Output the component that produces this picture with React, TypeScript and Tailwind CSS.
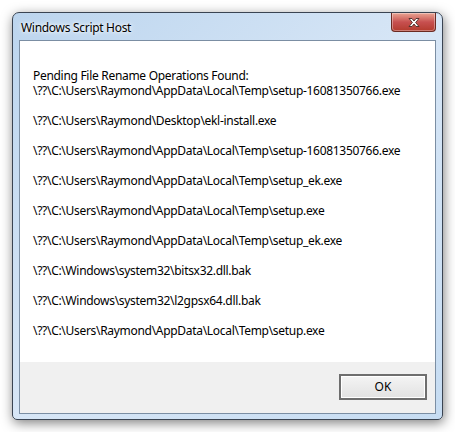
import React from 'react'

const lines = [
  'Pending File Rename Operations Found:',
  '\\??\\C:\\Users\\Raymond\\AppData\\Local\\Temp\\setup-16081350766.exe',
  '',
  '\\??\\C:\\Users\\Raymond\\Desktop\\ekl-install.exe',
  '',
  '\\??\\C:\\Users\\Raymond\\AppData\\Local\\Temp\\setup-16081350766.exe',
  '',
  '\\??\\C:\\Users\\Raymond\\AppData\\Local\\Temp\\setup_ek.exe',
  '',
  '\\??\\C:\\Users\\Raymond\\AppData\\Local\\Temp\\setup.exe',
  '',
  '\\??\\C:\\Users\\Raymond\\AppData\\Local\\Temp\\setup_ek.exe',
  '',
  '\\??\\C:\\Windows\\system32\\bitsx32.dll.bak',
  '',
  '\\??\\C:\\Windows\\system32\\l2gpsx64.dll.bak',
  '',
  '\\??\\C:\\Users\\Raymond\\AppData\\Local\\Temp\\setup.exe',
]

function CloseButton() {
  return (
    <div className="flex h-[19px] w-[45px] items-center justify-center rounded-b-[4px] border border-t-0 border-[#6b2a22] bg-gradient-to-b from-[#e8a493] via-[#c75050] to-[#b33a2c] shadow-[inset_0_0_0_1px_rgba(255,255,255,0.35)]">
      <svg width="14" height="11" viewBox="0 0 14 11">
        <path
          d="M2 1.5 H5 L7 4 L9 1.5 H12 L8.6 5.5 L12 9.5 H9 L7 7 L5 9.5 H2 L5.4 5.5 Z"
          fill="#ffffff"
          stroke="#4a2a26"
          strokeWidth="0.9"
          strokeLinejoin="round"
        />
      </svg>
    </div>
  )
}

export default function App() {
  return (
    <div className="h-[432px] w-[455px] bg-white pl-[12px] pt-[12px]" style={{ fontFamily: '"Noto Sans", "Open Sans", sans-serif' }}>
      <div className="flex h-[408px] w-[431px] flex-col rounded-t-[7px] rounded-b-[5px] border border-[#3a4452] bg-gradient-to-br from-[#bcd5ee] via-[#d7e6f6] to-[#c6dcf2] shadow-[1px_3px_12px_rgba(0,0,0,0.5)]">
        {/* Title bar */}
        <div className="flex h-[27px] items-start justify-between pl-[8px] pr-[6px]">
          <span className="mt-[7px] text-[12px] leading-[15px] tracking-[-0.3px] text-black [text-shadow:0_0_6px_#ffffff,0_0_3px_#ffffff]">
            Windows Script Host
          </span>
          <CloseButton />
        </div>

        {/* Client area */}
        <div className="mx-[6px] flex flex-1 flex-col border border-[#7b8ea3] bg-white">
          <div className="flex-1 whitespace-pre pl-[13px] pt-[27px] text-[12px] leading-[15px] tracking-[-0.3px] text-black">
            {lines.map((l, i) => (
              <div key={i} className="h-[15px]">{l}</div>
            ))}
          </div>
          <div className="flex h-[51px] items-start justify-end bg-[#f0f0f0] pr-[8px] pt-[12px]">
            <button className="flex h-[26px] w-[88px] items-center justify-center border-2 border-[#6e6e6e] bg-gradient-to-b from-[#f4f4f4] to-[#e2e2e2] text-[12px] text-black shadow-[inset_0_0_0_1px_#ffffff]">
              OK
            </button>
          </div>
        </div>
        <div className="h-[5px]" />
      </div>
    </div>
  )
}
